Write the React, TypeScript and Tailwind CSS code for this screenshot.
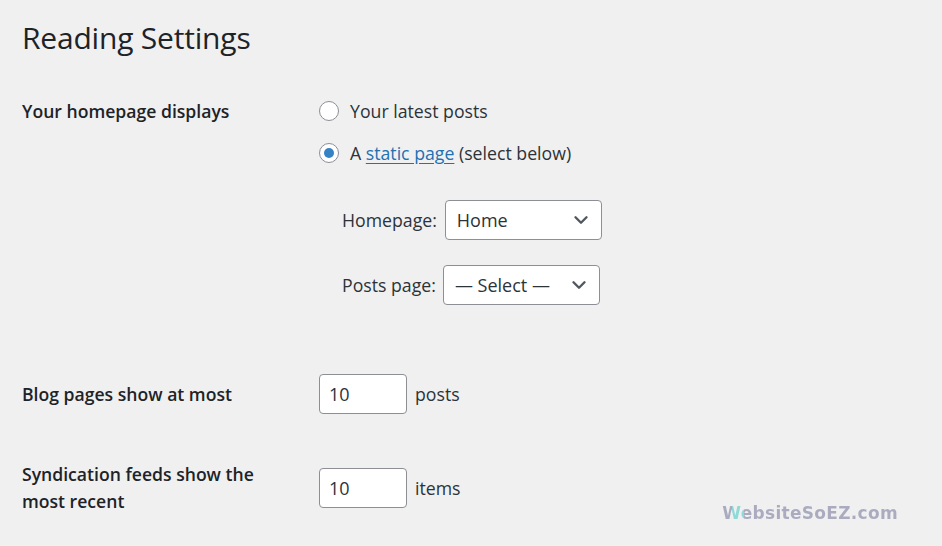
import { ChevronDown } from "lucide-react";

const font = "font-['Open_Sans','Noto_Sans',sans-serif]";

function Radio({ checked }: { checked?: boolean }) {
  return (
    <span className="grid size-[20px] shrink-0 place-items-center rounded-full border border-[#8c8f94] bg-white">
      {checked ? <span className="size-[10px] rounded-full bg-[#3582c4]" /> : null}
    </span>
  );
}

function Select({ value }: { value: string }) {
  return (
    <div className="flex h-[40px] w-[157px] items-center justify-between rounded-[4px] border border-[#8c8f94] bg-white pl-[11px] pr-[9px] text-[18px] text-[#2c3338]">
      <span>{value}</span>
      <ChevronDown size={22} strokeWidth={2.6} className="text-[#50575e]" />
    </div>
  );
}

function NumberBox({ value }: { value: string }) {
  return (
    <div className="flex h-[40px] w-[88px] items-center rounded-[4px] border border-[#8c8f94] bg-white pl-[9px] text-[18px] text-[#2c3338]">
      {value}
    </div>
  );
}

export default function App() {
  return (
    <div className={`relative min-h-[546px] bg-[#f0f0f1] pl-[22px] text-[#1d2327] ${font}`}>
      <h1 className="pt-[18px] text-[30px] font-normal leading-[40px] tracking-[-0.2px]">Reading Settings</h1>

      <div className="mt-[40px] flex">
        <div className="w-[297px] text-[17.6px] font-semibold leading-[26px]">Your homepage displays</div>
        <div className="flex flex-col text-[17.7px] leading-[26px] text-[#2c3338]">
          <label className="flex items-center gap-[11px]">
            <Radio />
            Your latest posts
          </label>
          <label className="mt-[16px] flex items-center gap-[11px]">
            <Radio checked />
            <span>
              A <span className="text-[#2271b1] underline underline-offset-[3px]">static page</span> (select below)
            </span>
          </label>
          <div className="mt-[34px] flex flex-col gap-[25px] pl-[23px]">
            <div className="flex items-center gap-[8px]">
              <span>Homepage:</span>
              <Select value="Home" />
            </div>
            <div className="flex items-center gap-[7px]">
              <span>Posts page:</span>
              <Select value="— Select —" />
            </div>
          </div>
        </div>
      </div>

      <div className="mt-[69px] flex items-center">
        <div className="w-[297px] text-[17.6px] font-semibold leading-[27px]">Blog pages show at most</div>
        <NumberBox value="10" />
        <span className="ml-[8px] text-[17.7px] text-[#2c3338]">posts</span>
      </div>

      <div className="mt-[47px] flex items-center">
        <div className="w-[297px] pr-[30px] text-[17.6px] font-semibold leading-[27px]">
          Syndication feeds show the most recent
        </div>
        <NumberBox value="10" />
        <span className="ml-[8px] text-[17.7px] text-[#2c3338]">items</span>
      </div>

      <div className="absolute bottom-[20px] right-[44px] bg-[linear-gradient(90deg,#aaabbf_0,#aaabbf_10px,#8fd9d6_10px,#8fd9d6_22px,#aaabbf_22px)] bg-clip-text font-['DejaVu_Sans',sans-serif] text-[17px] font-bold tracking-[0.3px] text-transparent">
        WebsiteSoEZ.com
      </div>
    </div>
  );
}
